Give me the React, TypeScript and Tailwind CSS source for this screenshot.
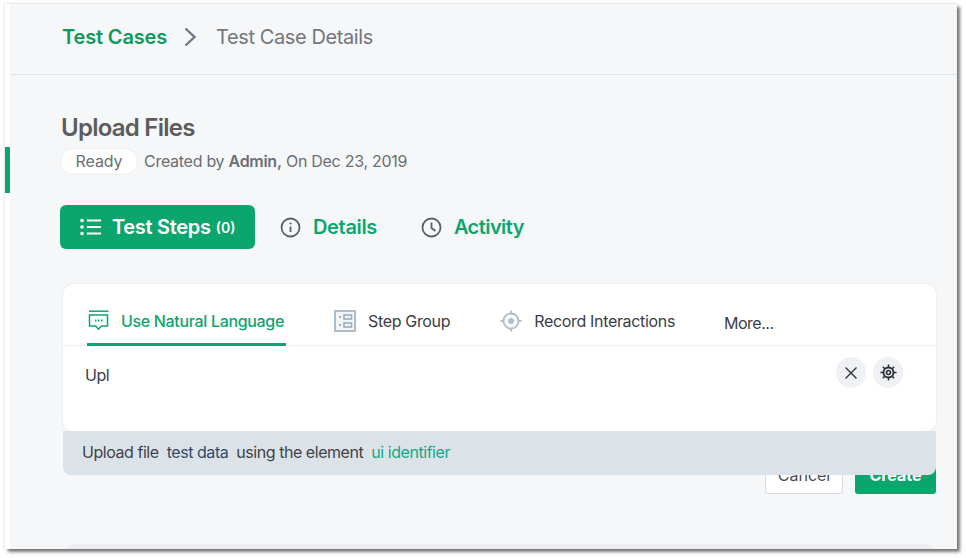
const font = { fontFamily: "Inter, 'Liberation Sans', sans-serif" };

function ListIcon() {
  return (
    <svg width="22" height="18" viewBox="0 0 22 18" fill="none" stroke="currentColor">
      <circle cx="2" cy="2.5" r="1.8" fill="currentColor" stroke="none" />
      <circle cx="2" cy="9" r="1.8" fill="currentColor" stroke="none" />
      <circle cx="2" cy="15.5" r="1.8" fill="currentColor" stroke="none" />
      <path d="M7 2.5h14M7 9h14M7 15.5h14" strokeWidth="2.2" />
    </svg>
  );
}

function InfoIcon() {
  return (
    <svg width="21" height="21" viewBox="0 0 21 21" fill="none" stroke="#5c5f66" strokeWidth="1.8">
      <circle cx="10.5" cy="10.5" r="9" />
      <path d="M10.5 9.5v5.5" />
      <circle cx="10.5" cy="6.5" r="1.1" fill="#5c5f66" stroke="none" />
    </svg>
  );
}

function ClockIcon() {
  return (
    <svg width="21" height="21" viewBox="0 0 21 21" fill="none" stroke="#5c5f66" strokeWidth="1.8">
      <circle cx="10.5" cy="10.5" r="9" />
      <path d="M10.5 5.5v5.5l4 3" />
    </svg>
  );
}

function ChatIcon() {
  return (
    <svg width="21" height="21" viewBox="0 0 21 21" fill="none" stroke="#0aa66e" strokeWidth="1.5">
      <path d="M1 1.2h19.5" />
      <path d="M1.5 5h18v11h-6l-3 3.2-3-3.2h-6z" />
      <path d="M7 10.5h1.5M10 10.5h1.5M13 10.5h1.5" strokeWidth="1.8" />
    </svg>
  );
}

function GroupIcon() {
  return (
    <svg width="22" height="22" viewBox="0 0 22 22" fill="none">
      <rect x="1" y="1" width="20" height="20" fill="#f2f4f6" stroke="#aebcc8" strokeWidth="2" />
      <path d="M5 7h2M5 15h2" stroke="#9fafbc" strokeWidth="2" />
      <rect x="10" y="5" width="7.5" height="4" stroke="#9fafbc" strokeWidth="1.6" />
      <rect x="10" y="13" width="7.5" height="4" stroke="#9fafbc" strokeWidth="1.6" />
    </svg>
  );
}

function TargetIcon() {
  return (
    <svg width="22" height="22" viewBox="0 0 22 22" fill="none" stroke="#aebcc8" strokeWidth="1.8">
      <circle cx="11" cy="11" r="7.5" />
      <circle cx="11" cy="11" r="3" fill="#aebcc8" stroke="none" />
      <path d="M11 0.5v3.5M11 18v3.5M0.5 11h3.5M18 11h3.5" />
    </svg>
  );
}

function GearIcon() {
  return (
    <svg width="17" height="17" viewBox="0 0 17 17" fill="none" stroke="#2c2f36">
      <circle cx="8.5" cy="8.5" r="5" strokeWidth="1.8" />
      <circle cx="8.5" cy="8.5" r="2" strokeWidth="1.6" />
      <path
        d="M8.5 0.5v3M8.5 13.5v3M0.5 8.5h3M13.5 8.5h3M2.8 2.8l2.2 2.2M12 12l2.2 2.2M14.2 2.8L12 5M5 12l-2.2 2.2"
        strokeWidth="1.5"
      />
    </svg>
  );
}

export default function App() {
  return (
    <div className="w-[966px] h-[558px] bg-white pt-[4px] pl-[5px] pr-[9px] pb-[9px] overflow-hidden" style={font}>
      <div className="flex h-full bg-white shadow-[3px_3px_3px_rgba(0,0,0,0.5),0_0_3px_rgba(0,0,0,0.2)]">
        <div className="w-[5px] shrink-0 pt-[143px]">
          <div className="h-[46px] bg-[#0aa66e]" />
        </div>

        <div className="flex-1 min-w-0 bg-[#f5f7f9] overflow-hidden">
          <div className="h-[71px] border-b border-[#e1e4e8] pl-[52px] pt-[20px] flex items-start text-[20px] leading-[26px]">
            <span className="font-semibold tracking-[-0.15px] text-[#0e9a5c]">Test Cases</span>
            <svg className="ml-[17px] mt-[3px]" width="12" height="20" viewBox="0 0 12 20" fill="none" stroke="#6f7a85" strokeWidth="2.4">
              <path d="M1.5 1.5L10.5 10L1.5 18.5" />
            </svg>
            <span className="ml-[20px] tracking-[-0.4px] text-[#73767c]">Test Case Details</span>
          </div>

          <div className="pl-[50px] pr-[21px] pt-[38px]">
            <h1 className="pl-px text-[24px] leading-[30px] font-semibold tracking-[-0.75px] text-[#5c5c5c]">Upload Files</h1>

            <div className="flex items-center mt-[5px] text-[16px] text-[#6b6e74]">
              <span className="w-[78px] h-[27px] rounded-full bg-white border border-[#eceef1] flex items-center justify-center pb-[2px] tracking-[-0.1px]">Ready</span>
              <span className="ml-[6px] pb-[2px] tracking-[-0.28px]">
                Created by <b className="font-semibold">Admin,</b> On Dec 23, 2019
              </span>
            </div>

            <div className="flex items-center mt-[30px]">
              <div className="w-[195px] h-[44px] rounded-[6px] bg-[#0aa66e] text-white flex items-center pl-[20px]">
                <ListIcon />
                <span className="ml-[10px] text-[20px] font-semibold tracking-[-0.3px]">Test Steps</span>
                <span className="ml-[5px] text-[14px] font-semibold">(0)</span>
              </div>
              <div className="ml-[25px] flex items-center">
                <InfoIcon />
                <span className="ml-[12px] text-[20px] font-semibold tracking-[-0.35px] text-[#0aa66e]">Details</span>
              </div>
              <div className="ml-[44px] flex items-center">
                <ClockIcon />
                <span className="ml-[12px] text-[20px] font-semibold tracking-[-0.55px] text-[#0aa66e]">Activity</span>
              </div>
            </div>

            <div className="relative ml-[3px] mt-[35px] h-[147px] bg-white rounded-[10px] shadow-[0_0_2px_rgba(0,0,0,0.12)]">
              <div className="h-[62px] border-b border-[#eef0f2] flex items-start px-[24px] text-[16px] tracking-[-0.33px] text-[#3a3d45]">
                <div className="h-[62px] border-b-[3px] border-[#0aa66e] flex items-center pt-[14px] pl-px pr-[2px]">
                  <ChatIcon />
                  <span className="ml-[12px] font-medium text-[#0aa66e]">Use Natural Language</span>
                </div>
                <div className="ml-[48px] h-[62px] flex items-center pt-[12px]">
                  <GroupIcon />
                  <span className="ml-[12px]">Step Group</span>
                </div>
                <div className="ml-[50px] h-[62px] flex items-center pt-[12px]">
                  <TargetIcon />
                  <span className="ml-[12px]">Record Interactions</span>
                </div>
                <span className="ml-[49px] pt-[27px] tracking-[-0.5px]">More...</span>
              </div>

              <div className="flex items-start pl-[22px] pr-[33px] pt-[11px] text-[16px] text-[#3a3d45]">
                <span className="pt-[6px] tracking-[-0.5px]">Upl</span>
                <div className="ml-auto flex gap-[7px]">
                  <div className="w-[30px] h-[31px] rounded-full bg-[#f0f1f5] flex items-center justify-center">
                    <svg width="14" height="14" viewBox="0 0 14 14" fill="none" stroke="#2f3239" strokeWidth="1.4">
                      <path d="M1.5 1.5l11 11M12.5 1.5l-11 11" />
                    </svg>
                  </div>
                  <div className="w-[30px] h-[31px] rounded-full bg-[#f0f1f5] flex items-center justify-center">
                    <GearIcon />
                  </div>
                </div>
              </div>

              {/* suggestion strip sits on top of the buttons below */}
              <div className="absolute z-10 left-0 right-0 top-full h-[44px] rounded-b-[8px] bg-[#dce3e8] flex items-center pl-[19px] pb-[2px] text-[16px] tracking-[-0.45px] text-[#3f4249]">
                <span>Upload file</span>
                <span className="ml-[8px] text-[#2f4a6b]">test data</span>
                <span className="ml-[8px]">using the element</span>
                <span className="ml-[8px] text-[#14a88a]">ui identifier</span>
              </div>
            </div>

            <div className="flex justify-end gap-[12px] mt-[25px]">
              <div className="w-[78px] h-[38px] rounded-[3px] bg-white border border-[#d5dbe1] flex items-center justify-center text-[16px] text-[#4a4d54]">Cancel</div>
              <div className="w-[81px] h-[38px] rounded-[3px] bg-[#0aa66e] flex items-center justify-center text-[16px] font-bold text-white">Create</div>
            </div>

            <div className="ml-[5px] mr-px mt-[50px] h-[40px] rounded-t-[10px] bg-[#eceef1]" />
          </div>
        </div>
      </div>
    </div>
  );
}
